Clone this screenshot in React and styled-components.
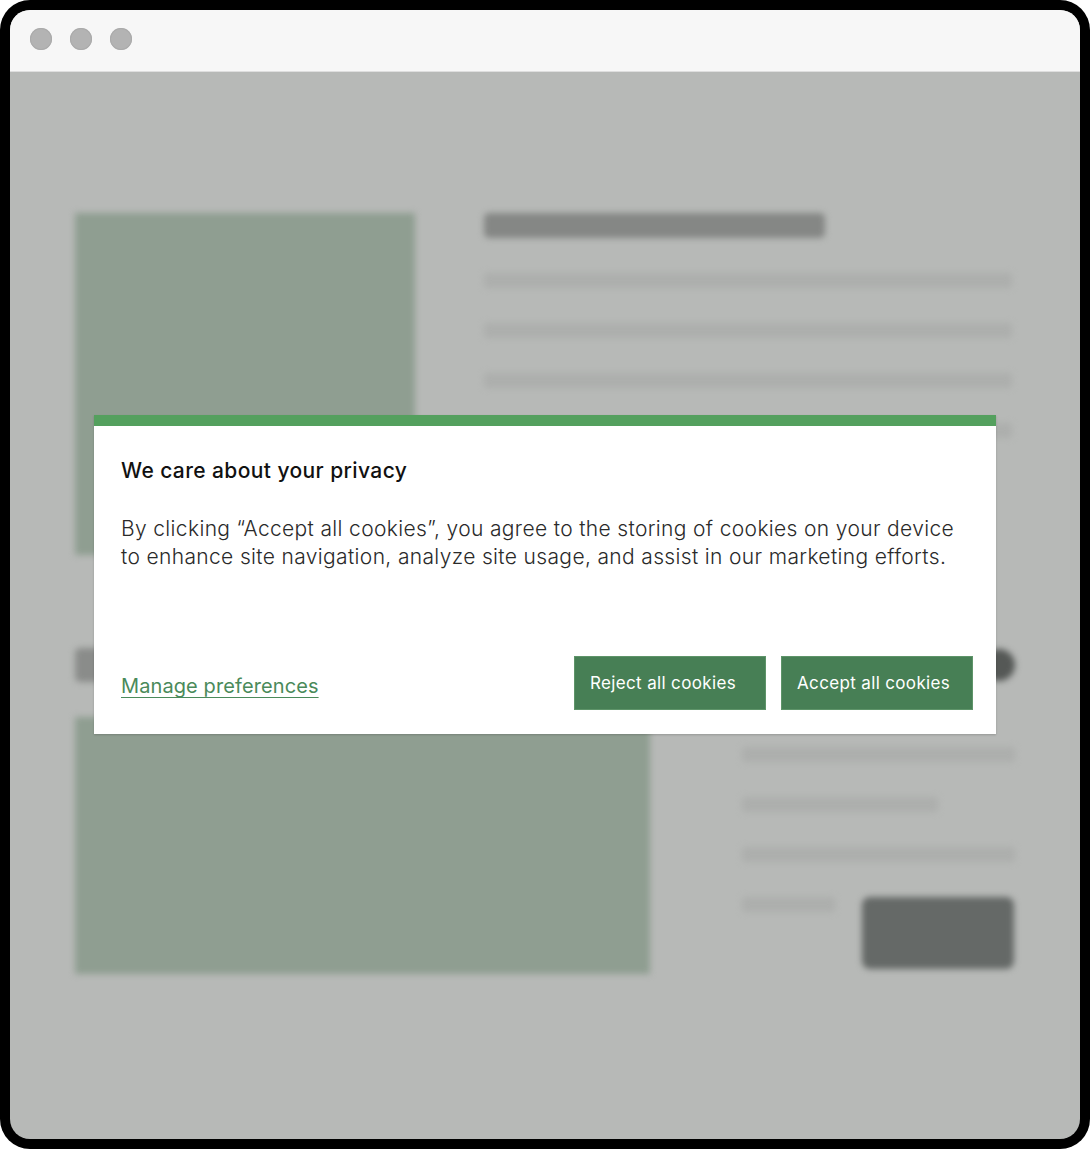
import React from 'react';
import styled, { createGlobalStyle } from 'styled-components';

const Global = createGlobalStyle`
  html, body {
    margin: 0;
    padding: 0;
    background: #fff;
  }
  * , *:before, *:after {
    box-sizing: border-box;
  }
`;

const Frame = styled.div`
  width: 1090px;
  height: 1149px;
  background: #000;
  border-radius: 30px;
  padding: 10px;
`;

const Window = styled.div`
  height: 100%;
  border-radius: 20px;
  overflow: hidden;
  background: #b7b9b7;
  display: flex;
  flex-direction: column;
`;

const TitleBar = styled.div`
  height: 62px;
  flex: none;
  background: #f7f7f7;
  border-bottom: 1px solid #dedede;
  display: flex;
  align-items: center;
  gap: 18px;
  padding: 0 0 3px 20px;
`;

const Dot = styled.span`
  width: 22px;
  height: 22px;
  border-radius: 50%;
  background: #b3b3b3;
  box-shadow: inset 0 0 0 1px #ababab;
`;

const Viewport = styled.div`
  position: relative;
  flex: 1;
`;

const Page = styled.div`
  filter: blur(3px);
  padding: 141px 65px 0 65px;
  display: flex;
  flex-direction: column;
`;

const Row = styled.div`
  display: flex;
  gap: ${p => p.$gap}px;
  align-items: ${p => p.$align || 'flex-start'};
  justify-content: ${p => p.$justify || 'flex-start'};
  margin-top: ${p => p.$mt || 0}px;
`;

const Picture = styled.div`
  width: ${p => p.$w}px;
  height: ${p => p.$h}px;
  background: #8f9e91;
  flex: none;
`;

const Column = styled.div`
  width: ${p => p.$w}px;
  padding-top: ${p => p.$pt || 0}px;
  display: flex;
  flex-direction: column;
  gap: ${p => p.$gap}px;
`;

const Heading = styled.div`
  width: ${p => p.$w}px;
  height: ${p => p.$h}px;
  background: ${p => p.$c || '#858785'};
  border-radius: 5px;
  flex: none;
`;

const Line = styled.div`
  width: ${p => p.$w ? `${p.$w}px` : '100%'};
  height: 15px;
  background: #adafad;
  border-radius: 4px;
`;

const Knob = styled.div`
  width: 32px;
  height: 32px;
  border-radius: 50%;
  background: #555856;
  flex: none;
`;

const CtaBlock = styled.div`
  width: 152px;
  height: 72px;
  border-radius: 8px;
  background: #656967;
`;

const Modal = styled.div`
  position: absolute;
  left: 84px;
  top: 343px;
  width: 902px;
  height: 319px;
  background: #fff;
  border-top: 11px solid #54a05e;
  box-shadow: 0 1px 2px rgba(0, 0, 0, 0.18);
  padding: 31px 23px 24px 27px;
  display: flex;
  flex-direction: column;
  font-family: Inter, "Liberation Sans", sans-serif;
`;

const ModalTitle = styled.h2`
  margin: 0;
  font-size: 21px;
  line-height: 28px;
  font-weight: 500;
  color: #111;
  letter-spacing: 0.4px;
`;

const ModalText = styled.p`
  margin: 30px 0 0;
  font-size: 21px;
  line-height: 28px;
  font-weight: 300;
  color: #2a2a2a;
  letter-spacing: 0.35px;
`;

const Footer = styled.div`
  margin-top: auto;
  display: flex;
  align-items: center;
  justify-content: space-between;
`;

const PrefLink = styled.a`
  font-size: 20px;
  font-weight: 400;
  color: #4a8a5a;
  text-decoration: underline;
  text-underline-offset: 4px;
  text-decoration-thickness: 1px;
  letter-spacing: 0.1px;
  margin-top: 6px;
  cursor: pointer;
`;

const Buttons = styled.div`
  display: flex;
  gap: 15px;
`;

const Button = styled.button`
  width: 192px;
  height: 54px;
  padding: 0 15px;
  text-align: left;
  background: #477f55;
  border: 1px solid #5e9469;
  color: #fff;
  font-family: Inter, "Liberation Sans", sans-serif;
  font-size: 17px;
  font-weight: 400;
  letter-spacing: 0.35px;
  cursor: pointer;
`;

export default function App() {
  return (
    <>
      <Global />
      <Frame>
        <Window>
          <TitleBar>
            <Dot />
            <Dot />
            <Dot />
          </TitleBar>
          <Viewport>
            <Page>
              <Row $gap={69}>
                <Picture $w={340} $h={342} />
                <Column $w={528} $gap={35}>
                  <Heading $w={341} $h={25} />
                  <Line />
                  <Line />
                  <Line />
                  <Line />
                </Column>
              </Row>
              <Row $gap={0} $mt={93} $align="center" $justify="space-between">
                <Heading $w={420} $h={34} $c="#8a8c8a" />
                <Knob />
              </Row>
              <Row $gap={92} $mt={35}>
                <Picture $w={575} $h={257} />
                <Column $w={273} $gap={35} $pt={30}>
                  <Line />
                  <Line $w={196} />
                  <Line />
                  <Row $gap={27} $align="flex-start" $mt={0}>
                    <Line $w={93} />
                    <CtaBlock />
                  </Row>
                </Column>
              </Row>
            </Page>
            <Modal role="dialog" aria-label="Cookie consent">
              <ModalTitle>We care about your privacy</ModalTitle>
              <ModalText>
                By clicking “Accept all cookies”, you agree to the storing of cookies on your device to enhance site navigation, analyze site usage, and assist in our marketing efforts.
              </ModalText>
              <Footer>
                <PrefLink>Manage preferences</PrefLink>
                <Buttons>
                  <Button>Reject all cookies</Button>
                  <Button>Accept all cookies</Button>
                </Buttons>
              </Footer>
            </Modal>
          </Viewport>
        </Window>
      </Frame>
    </>
  );
}
